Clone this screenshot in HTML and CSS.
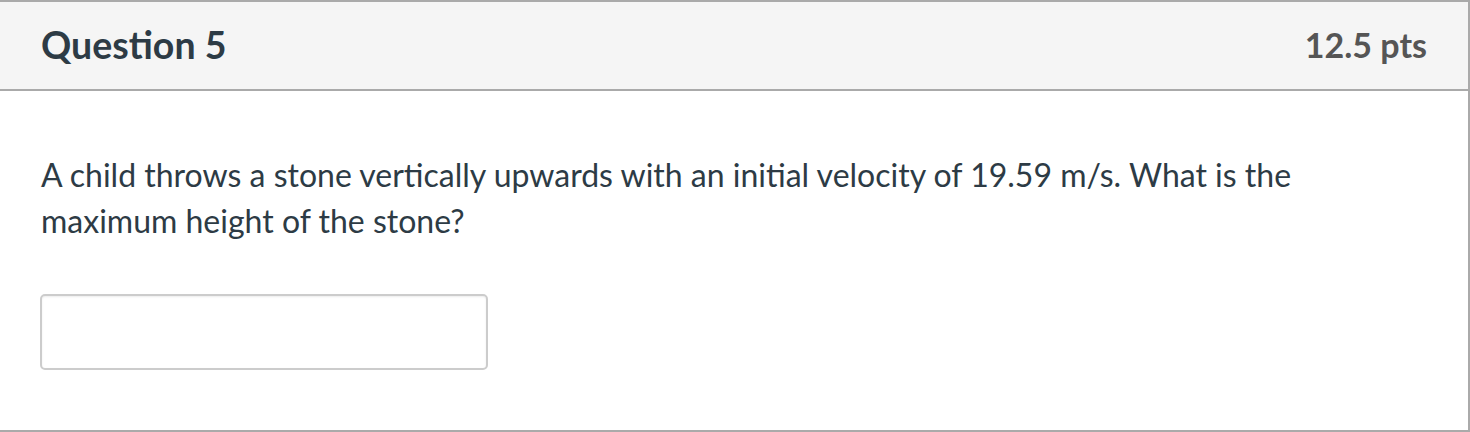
FILE: index.html
```html
<!DOCTYPE html>
<html>
<head>
<meta charset="utf-8">
<link rel="stylesheet" href="styles.css">
</head>
<body>
<div class="question">
  <div class="header">
    <h2 class="title">Question 5</h2>
    <div class="points">12.5 pts</div>
  </div>
  <div class="content">
    <p class="text">A child throws a stone vertically upwards with an initial velocity of 19.59 m/s. What is the<br>maximum height of the stone?</p>
    <input class="answer" type="text">
  </div>
</div>
</body>
</html>
```
FILE: styles.css
```css
html, body {
  margin: 0;
  padding: 0;
  background: #ffffff;
}
body {
  font-family: Lato, "Noto Sans", sans-serif;
  width: 1470px;
  height: 432px;
  overflow: hidden;
}
.question {
  box-sizing: border-box;
  width: 1470px;
  height: 432px;
  border-top: 2px solid #aaaaaa;
  border-right: 2px solid #aaaaaa;
  border-bottom: 2px solid #aaaaaa;
}
.header {
  box-sizing: border-box;
  height: 89px;
  background: #f5f5f5;
  border-bottom: 2px solid #aaaaaa;
  display: flex;
  align-items: center;
  justify-content: space-between;
  padding: 0 41px 3px 41px;
}
.title {
  margin: 0;
  font-size: 37.5px;
  font-weight: 700;
  color: #2d3b45;
}
.points {
  font-size: 34px;
  font-weight: 700;
  color: #555555;
}
.content {
  padding: 61px 0 0 40px;
}
.text {
  margin: 0 0 0 1px;
  font-size: 32px;
  line-height: 46px;
  color: #2d3b45;
}
.answer {
  display: block;
  box-sizing: border-box;
  margin-top: 50px;
  width: 448px;
  height: 76px;
  border: 2px solid #cccccc;
  border-radius: 5px;
  box-shadow: inset 0 1px 2px rgba(0,0,0,0.08);
  background: #ffffff;
}
```
